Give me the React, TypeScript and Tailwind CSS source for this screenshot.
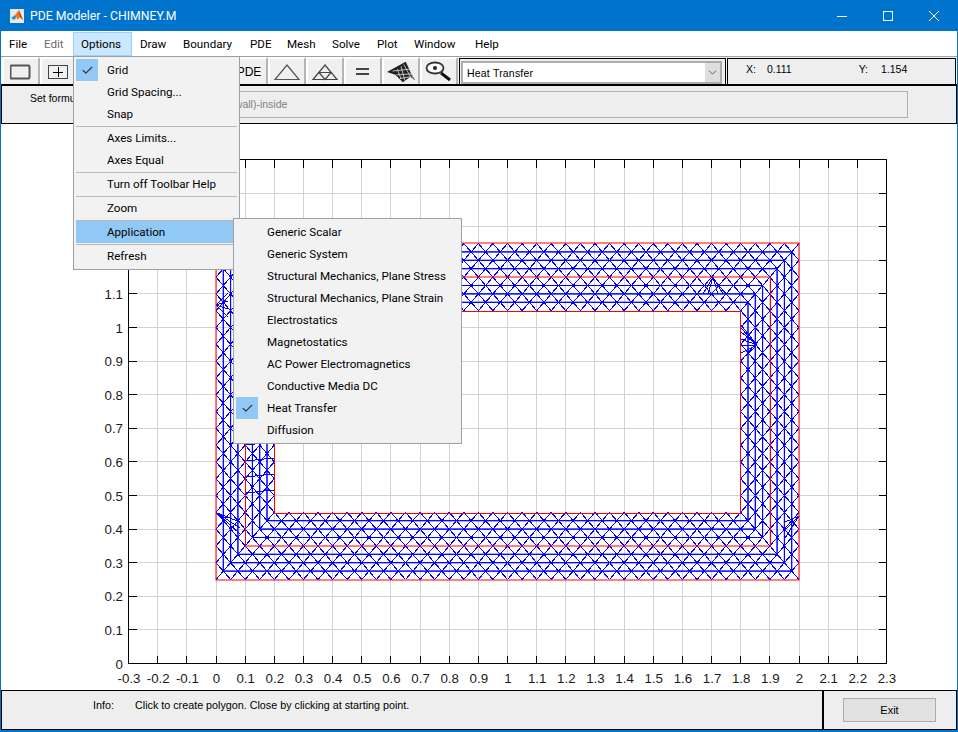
import { Check, ChevronDown } from "lucide-react";

const menus = [
  { label: "File", w: "w-[35px]" },
  { label: "Edit", w: "w-[37px]", disabled: true },
  { label: "Options", w: "w-[59px]", active: true },
  { label: "Draw", w: "w-[43px]" },
  { label: "Boundary", w: "w-[67px]" },
  { label: "PDE", w: "w-[37px]" },
  { label: "Mesh", w: "w-[45px]" },
  { label: "Solve", w: "w-[45px]" },
  { label: "Plot", w: "w-[37px]" },
  { label: "Window", w: "w-[61px]" },
  { label: "Help", w: "w-[45px]" },
];

const optionGroups = [
  [{ label: "Grid", checked: true }, { label: "Grid Spacing..." }, { label: "Snap" }],
  [{ label: "Axes Limits..." }, { label: "Axes Equal" }],
  [{ label: "Turn off Toolbar Help" }],
  [{ label: "Zoom" }],
  [{ label: "Application", highlight: true }],
  [{ label: "Refresh" }],
];

const applications = [
  "Generic Scalar",
  "Generic System",
  "Structural Mechanics, Plane Stress",
  "Structural Mechanics, Plane Strain",
  "Electrostatics",
  "Magnetostatics",
  "AC Power Electromagnetics",
  "Conductive Media DC",
  "Heat Transfer",
  "Diffusion",
];

const px = (x: number) => 216 + x * 291.5;
const py = (y: number) => 663.5 - y * 336;

type Pt = { u: number; x: number; y: number };

// one side of the k-th ring, running corner to corner
function sidePts(k: number, side: number): Pt[] {
  const d = k * 0.025;
  const off = k % 2 ? 0.025 : 0;
  const horizontal = side < 2;
  const lo = horizontal ? d : 0.25 + d;
  const hi = horizontal ? 2 - d : 1.25 - d;
  const start = horizontal ? 0 : 0.25;
  const fixed = side === 0 ? 1.25 - d : side === 1 ? 0.25 + d : side === 2 ? d : 2 - d;
  const us = [lo];
  for (let u = start + off; u < hi - 0.012; u += 0.05) {
    if (u > lo + 0.012) us.push(u);
  }
  us.push(hi);
  return us.map((u) =>
    horizontal ? { u, x: px(u), y: py(fixed) } : { u, x: px(fixed), y: py(u) },
  );
}

// hand placed fans where the real mesh is refined
const fans: [number, number, number, number][] = [];
const addFan = (ax: number, ay: number, targets: [number, number][]) => {
  targets.forEach(([x, y]) => fans.push([ax, ay, x, y]));
};
addFan(713, 277, [[703, 294], [708, 294], [718, 294], [723, 294]]);
addFan(757, 345, [[741, 325], [741, 332], [741, 339], [741, 346], [741, 353], [741, 360]]);
addFan(217, 513, [[240, 522], [240, 528], [240, 534], [240, 540]]);
addFan(216, 305, [[228, 293], [228, 301], [228, 309], [228, 317]]);
addFan(799, 516, [[785, 522], [785, 530], [785, 538]]);
[445, 461, 477, 493].forEach((y) => fans.push([245, y, 274, y - 3]));

function buildMesh() {
  let diag = "";
  let straight = "";
  const seg = (a: Pt, b: Pt) => {
    const line = `M${a.x.toFixed(1)} ${a.y.toFixed(1)}L${b.x.toFixed(1)} ${b.y.toFixed(1)}`;
    if (Math.abs(a.x - b.x) < 0.1 || Math.abs(a.y - b.y) < 0.1) straight += line;
    else diag += line;
  };
  // rings 0, 4 and 8 are the red boundaries, drawn on their own
  const along = (k: number, a: Pt, b: Pt) => {
    if (k % 4 !== 0) seg(a, b);
  };
  for (let side = 0; side < 4; side++) {
    for (let k = 0; k < 8; k++) {
      const a = sidePts(k, side);
      const b = sidePts(k + 1, side);
      let i = 0;
      let j = 0;
      seg(a[0], b[0]);
      while (i < a.length - 1 || j < b.length - 1) {
        if (j === b.length - 1 || (i < a.length - 1 && a[i + 1].u <= b[j + 1].u)) {
          along(k, a[i], a[i + 1]);
          seg(a[i + 1], b[j]);
          i++;
        } else {
          along(k + 1, b[j], b[j + 1]);
          seg(b[j + 1], a[i]);
          j++;
        }
      }
    }
  }
  fans.forEach(([x1, y1, x2, y2]) => {
    diag += `M${x1} ${y1}L${x2} ${y2}`;
  });
  return { diag, straight };
}

const mesh = buildMesh();
const xTicks = Array.from({ length: 27 }, (_, i) => i - 3);
const yTicks = Array.from({ length: 16 }, (_, i) => i);
const fmt = (n: number) => String(Math.round(n) / 10);

function MatlabLogo() {
  return (
    <svg width="16" height="16" viewBox="0 0 16 16">
      <rect x="1" y="1" width="14" height="14" fill="#e8e8e8" />
      <path d="M2 10 L6 7 L8 9 L5 12 Z" fill="#3f8fb3" />
      <path d="M6 7 L10 2 L14 12 L11 9 L8 12 L8 9 Z" fill="#e8742c" />
      <path d="M10 2 L14 12 L11 9 Z" fill="#c5381b" />
    </svg>
  );
}

function ToolButton({ children }: { children?: React.ReactNode }) {
  return (
    <div className="w-[38px] h-[27px] flex items-center justify-center bg-[#f0f0f0] border-l-2 border-t-2 border-white border-r-2 border-r-[#b4b4b4]">
      {children}
    </div>
  );
}

const toolIcons = [
  <svg key="rect" width="22" height="16"><rect x="0.5" y="1.5" width="19" height="13" rx="1" fill="none" stroke="#555" strokeWidth="2" /></svg>,
  <svg key="rectc" width="22" height="16" shapeRendering="crispEdges"><rect x="0.5" y="1.5" width="19" height="13" fill="none" stroke="#444" strokeWidth="1.5" /><path d="M10 3v10M5 8h10" stroke="#000" /></svg>,
  <svg key="ell" width="22" height="16"><ellipse cx="11" cy="8" rx="9" ry="6" fill="none" stroke="#555" strokeWidth="2" /></svg>,
  <svg key="ellc" width="22" height="16"><ellipse cx="11" cy="8" rx="9" ry="6" fill="none" stroke="#555" strokeWidth="2" /><path d="M11 4v8M7 8h8" stroke="#000" /></svg>,
  <svg key="poly" width="22" height="16"><path d="M2 13 L6 2 L20 5 L14 14 Z" fill="none" stroke="#555" strokeWidth="2" /></svg>,
  <span key="om" className="text-[12px] text-black font-['Liberation_Sans',sans-serif]">∂Ω</span>,
  <span key="pde" className="text-[12px] text-black font-['Liberation_Sans',sans-serif]">PDE</span>,
  <svg key="tri" width="28" height="18"><path d="M2 16.5 L14 2 L26 16.5 Z" fill="none" stroke="#555" strokeWidth="1.2" /></svg>,
  <svg key="tri2" width="28" height="18"><path d="M2 16.5 L14 2 L26 16.5 Z M8 9.5 H20 L14 16.5 Z" fill="none" stroke="#444" strokeWidth="1.2" /></svg>,
  <svg key="eq" width="16" height="10" shapeRendering="crispEdges"><path d="M1 1h13v2H1zM1 6h13v2H1z" fill="#444" /></svg>,
  <svg key="net" width="30" height="24" viewBox="0 0 32 24"><path d="M1 12 L21 1 L31 21 L26 17 L18 23 L10 15 Z" fill="#222" /><path d="M23 3 L29 19 M19 4 L26 17 M16 6 L20 21 M12 9 L16 19 M7 11 L25 9 M11 15 L28 14 M15 19 L26 17" stroke="#eee" strokeWidth="0.8" fill="none" /></svg>,
  <svg key="zoom" width="30" height="22" viewBox="0 0 30 22"><ellipse cx="11" cy="7" rx="8.5" ry="5.5" fill="#fff" stroke="#333" strokeWidth="1.8" /><circle cx="11" cy="7" r="2" fill="#222" /><path d="M17 12 L26 19" stroke="#111" strokeWidth="3" /></svg>,
];

function Plot() {
  return (
    <svg viewBox="1 124 956 566" className="block w-[956px] h-[566px] bg-white">
      <g stroke="#d2d2d2" shapeRendering="crispEdges">
        {xTicks.map((t) => (
          <line key={t} x1={Math.floor(px(t / 10)) + 0.5} x2={Math.floor(px(t / 10)) + 0.5} y1={159.5} y2={663.5} />
        ))}
        {yTicks.map((t) => (
          <line key={t} x1={128.5} x2={886.5} y1={Math.floor(py(t / 10)) + 0.5} y2={Math.floor(py(t / 10)) + 0.5} />
        ))}
      </g>
      <g stroke="#000" shapeRendering="crispEdges">
        {xTicks.map((t) => {
          const x = Math.floor(px(t / 10)) + 0.5;
          return <path key={t} d={`M${x} 159.5v8M${x} 663.5v-8`} fill="none" />;
        })}
        {yTicks.map((t) => {
          const y = Math.floor(py(t / 10)) + 0.5;
          return <path key={t} d={`M128.5 ${y}h8M886.5 ${y}h-8`} fill="none" />;
        })}
        <rect x="128.5" y="159.5" width="758" height="504" fill="none" />
      </g>
      <path d={mesh.diag} stroke="#0000ff" strokeWidth="1" fill="none" shapeRendering="crispEdges" />
      <path d={mesh.straight} stroke="#0000ff" strokeWidth="1" fill="none" />
      <g fill="none" stroke="#ff0000" strokeWidth="1">
        <rect x="216" y="243" width="583" height="337" />
        <path d="M245.5 277H770.5V546H245.5Z" />
        <rect x="274.5" y="311.5" width="466" height="202" />
      </g>
      <g fontFamily="'Liberation Sans', sans-serif" fontSize="13.3" fill="#1a1a1a">
        {xTicks.map((t) => (
          <text key={t} x={px(t / 10) + 0.5} y={683} textAnchor="middle">{fmt(t)}</text>
        ))}
        {yTicks.filter((t) => t <= 11).map((t) => (
          <text key={t} x={123} y={py(t / 10) + 5} textAnchor="end">{fmt(t)}</text>
        ))}
      </g>
    </svg>
  );
}

function MenuRow({ label, checked, highlight, chevron }: { label: string; checked?: boolean; highlight?: boolean; chevron?: boolean }) {
  return (
    <div className={`relative h-[22px] flex items-center pl-[31px] pt-[2px] whitespace-nowrap ${highlight ? "bg-[#90c8f6]" : ""}`}>
      {checked && (
        <span className="absolute left-0 top-0 w-[22px] h-[22px] bg-[#90c8f6] flex items-center justify-center">
          <Check className="w-[13px] h-[13px] text-[#333]" strokeWidth={2} />
        </span>
      )}
      {label}
      {chevron && <span className="absolute right-[-2px] text-[11px]">›</span>}
    </div>
  );
}

export default function App() {
  return (
    <div className="relative w-[958px] h-[732px] bg-[#0073cc] flex flex-col px-px pb-[2px] overflow-hidden font-['Roboto',sans-serif] text-[11.6px] text-black">
      {/* title bar */}
      <div className="h-[31px] flex items-center text-white shrink-0">
        <span className="ml-[8px] mr-[5px] flex"><MatlabLogo /></span>
        <span className="pt-px text-[12.25px]">PDE Modeler - CHIMNEY.M</span>
        <div className="ml-auto flex items-center">
          <div className="w-[46px] flex justify-center"><svg width="10" height="10" shapeRendering="crispEdges"><path d="M0 5.5h10" stroke="#fff" /></svg></div>
          <div className="w-[46px] flex justify-center"><svg width="10" height="10" shapeRendering="crispEdges"><rect x="0.5" y="0.5" width="9" height="9" fill="none" stroke="#fff" /></svg></div>
          <div className="w-[46px] flex justify-center"><svg width="10" height="10"><path d="M0 0L10 10M10 0L0 10" stroke="#fff" /></svg></div>
        </div>
      </div>

      {/* menu bar */}
      <div className="h-[26px] bg-white flex pt-px border-b border-[#a0a0a0] shrink-0">
        {menus.map((m) => (
          <div
            key={m.label}
            className={`${m.w} h-[24px] flex items-center pl-2 pt-[2px] ${m.disabled ? "text-[#6d6d6d]" : ""} ${m.active ? "bg-[#cce8ff] border border-[#99d1ff] pl-[7px]" : ""}`}
          >
            {m.label}
          </div>
        ))}
      </div>

      {/* toolbar */}
      <div className="h-[27px] bg-[#f0f0f0] flex shrink-0 font-['Liberation_Sans',sans-serif] text-[10.5px]">
        <div className="w-[458px] flex pl-px">
          {toolIcons.map((icon, i) => (
            <ToolButton key={i}>{icon}</ToolButton>
          ))}
        </div>
        <div className="w-[267px] h-[26px] mt-px border border-black border-b-0 bg-[#eeeeee] pl-[1px] pr-[3px] pt-[2px]">
          <div className="h-[23px] border-2 border-[#acacac] bg-white flex items-center pl-[4px]">
            <span className="pt-[2px] tracking-[0.2px]">Heat Transfer</span>
            <span className="ml-auto w-[15px] h-full bg-[#dedede] flex items-center justify-center">
              <ChevronDown className="w-[13px] h-[13px] text-[#444]" strokeWidth={1.5} />
            </span>
          </div>
        </div>
        <div className="ml-px w-[229px] h-[26px] mt-px border border-black border-b-0 bg-[#eeeeee] flex pt-[3px]">
          <span className="ml-[18px]">X:</span>
          <span className="ml-[11px]">0.111</span>
          <span className="ml-[67px]">Y:</span>
          <span className="ml-[13px]">1.154</span>
        </div>
      </div>

      {/* formula row */}
      <div className="h-[40px] bg-[#eeeeee] border border-black border-t-2 flex items-start shrink-0 font-['Liberation_Sans',sans-serif] text-[10.5px] pr-[48px]">
        <span className="ml-[28px] mt-[5px] w-[57px] whitespace-nowrap overflow-hidden">Set formula:</span>
        <div className="flex-1 h-[27px] mt-[5px] border border-[#b0b0b0] flex items-center pl-[106px] text-[#808080]">
          (outside-wall)-inside
        </div>
      </div>

      {/* plot */}
      <div className="flex-1 min-h-0 bg-white">
        <Plot />
      </div>

      {/* status */}
      <div className="h-[40px] flex shrink-0 bg-black p-px font-['Liberation_Sans',sans-serif] text-[10.75px]">
        <div className="w-[820px] bg-[#eeeeee] flex pt-[6px]">
          <span className="ml-[91px] w-[42px]">Info:</span>
          <span>Click to create polygon. Close by clicking at starting point.</span>
        </div>
        <div className="ml-[2px] flex-1 bg-[#eeeeee] pt-[7px] pl-[19px]">
          <div className="w-[93px] h-[24px] pt-px bg-[#e1e1e1] border border-[#adadad] flex items-center justify-center text-[11px]">Exit</div>
        </div>
      </div>

      {/* Options menu */}
      <div className="absolute left-[73px] top-[56px] w-[167px] h-[214px] bg-[#f2f2f2] border border-[#a0a0a0] p-[2px]">
        {optionGroups.map((group, g) => (
          <div key={g}>
            {g > 0 && <div className="h-[2px] flex items-center"><div className="h-px w-full bg-[#b8b8b8]" /></div>}
            {group.map((item) => (
              <MenuRow key={item.label} {...item} chevron={item.label === "Application"} />
            ))}
          </div>
        ))}
      </div>

      {/* Application submenu */}
      <div className="absolute left-[233px] top-[218px] w-[229px] h-[226px] bg-[#f2f2f2] border border-[#a0a0a0] p-[2px]">
        {applications.map((a) => (
          <MenuRow key={a} label={a} checked={a === "Heat Transfer"} />
        ))}
      </div>
    </div>
  );
}
